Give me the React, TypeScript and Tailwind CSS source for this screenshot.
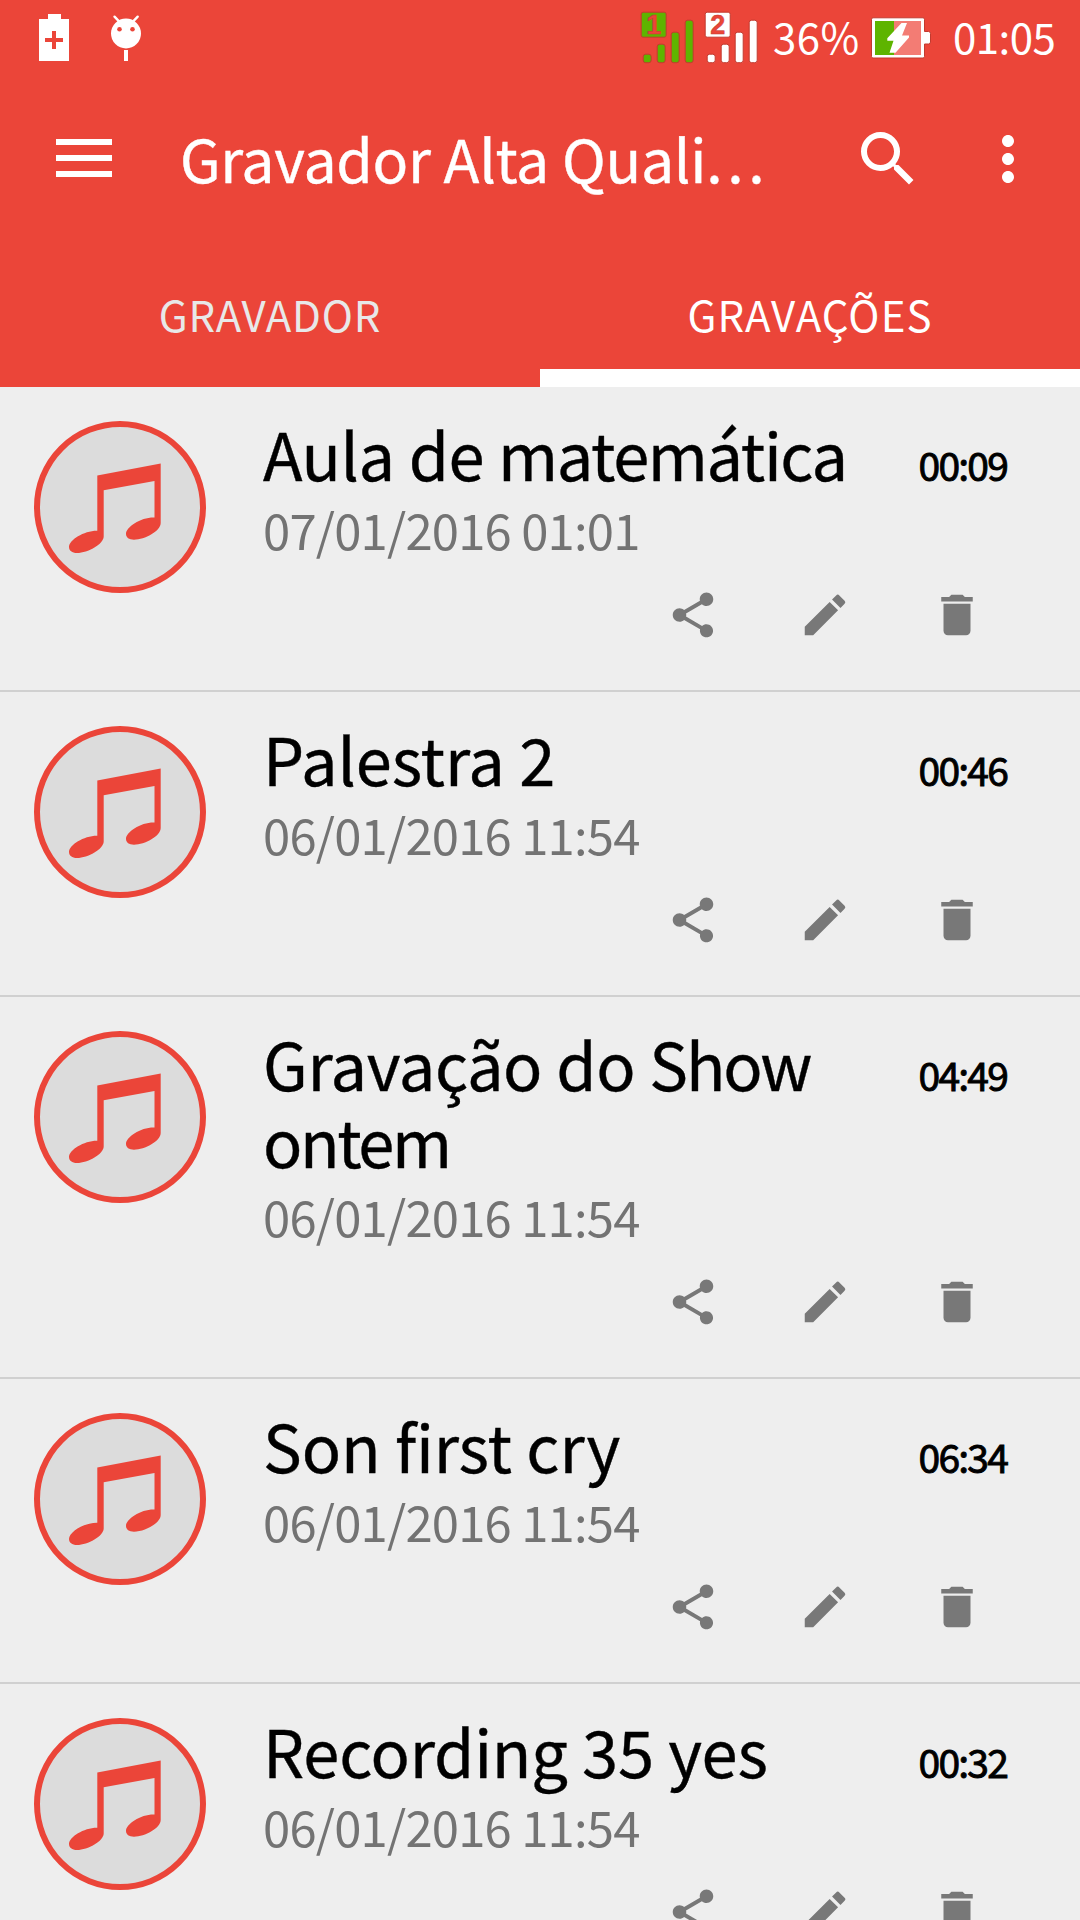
import { MdDelete, MdEdit, MdMoreVert, MdSearch, MdShare } from "react-icons/md";

type Recording = {
  title: { text: string; className: string }[];
  date: string;
  length: string;
};

const recordings: Recording[] = [
  {
    title: [
      { text: "Aula de ", className: "tracking-[-0.5px]" },
      { text: "matemática", className: "tracking-[-1.4px]" },
    ],
    date: "07/01/2016 01:01",
    length: "00:09",
  },
  {
    title: [{ text: "Palestra 2", className: "tracking-[-0.1px]" }],
    date: "06/01/2016 11:54",
    length: "00:46",
  },
  {
    title: [
      { text: "Gravação do ", className: "tracking-[-0.4px]" },
      { text: "Show ", className: "tracking-[-2.1px]" },
      { text: "ontem", className: "tracking-[-2.4px]" },
    ],
    date: "06/01/2016 11:54",
    length: "04:49",
  },
  {
    title: [{ text: "Son first cry", className: "tracking-[-0.1px]" }],
    date: "06/01/2016 11:54",
    length: "06:34",
  },
  {
    title: [{ text: "Recording 35 yes", className: "tracking-[-0.2px]" }],
    date: "06/01/2016 11:54",
    length: "00:32",
  },
];

function SignalIcon({ sim, color }: { sim: string; color: string }) {
  return (
    <svg width="56" height="56" viewBox="0 0 56 56" className="shrink-0">
      <g fill={color} stroke="#c23a2f" strokeWidth="1">
        <rect x="1.2" y="2.2" width="25" height="25" rx="2" />
        <rect x="3.2" y="44.2" width="8" height="8.5" rx="2.5" />
        <rect x="17.2" y="34.2" width="8" height="18.5" rx="2.5" />
        <rect x="31.2" y="22.2" width="8" height="30.5" rx="2.5" />
        <rect x="45.2" y="10.2" width="8" height="42.5" rx="2.5" />
      </g>
      <text
        x="13.7"
        y="24.3"
        textAnchor="middle"
        fill="#eb4539"
        stroke="#c23a2f"
        strokeWidth="0.5"
        className="font-['Liberation_Sans'] text-[27px] font-bold"
      >
        {sim}
      </text>
    </svg>
  );
}

function StatusBar() {
  return (
    <div className="flex h-[75px] items-start">
      <svg width="32" height="48" viewBox="0 0 32 48" className="mt-[14px] ml-[38px]">
        <path fill="#fff" d="M1 5h9V0h13v5h8v42H1z" />
        <path stroke="#eb4539" strokeWidth="4" d="M16 17v18M7 26h18" />
      </svg>
      <svg width="32" height="48" viewBox="0 0 32 48" className="mt-[14px] ml-10">
        <circle cx="16" cy="19.5" r="15" fill="#fff" />
        <path
          stroke="#fff"
          strokeWidth="2.4"
          strokeLinecap="round"
          d="M4.500 2.700l4.500 4.600M27.700 2.700l-4.500 4.600"
        />
        <circle cx="9.5" cy="15.3" r="2.3" fill="#eb4539" />
        <circle cx="22.5" cy="15.3" r="2.3" fill="#eb4539" />
        <path fill="#fff" d="M14 36h4v11h-4z" />
      </svg>
      <div className="mt-[10px] ml-[498px] flex gap-2">
        <SignalIcon sim="1" color="#5eb400" />
        <SignalIcon sim="2" color="#ffffff" />
      </div>
      <span className="ml-[13px] w-[98px] text-[42px] leading-[72px] tracking-[0.4px] whitespace-nowrap">
        36%
      </span>
      <svg width="60" height="42" viewBox="0 0 60 42" className="mt-[17px]">
        <path
          fill="#fff"
          stroke="#c23a2f"
          strokeWidth="1"
          d="M2 .8h50a1.500 1.500 0 011.500 1.500V14.500h4a2 2 0 012 2V25a2 2 0 01-2 2h-4V39.500a1.500 1.500 0 01-1.500 1.500H2A1.500 1.500 0 01.500 39.500V2.300A1.500 1.500 0 012 .8z"
        />
        <path fill="#f37c74" d="M4 4h46v34H4z" />
        <path fill="#5eb400" d="M4 4h19v34H4z" />
        <path
          fill="#fff"
          d="M30.500 6h5.500l-5 12.500h7v2L24.500 35.700h-6l4-12h-6.200v-2.500z"
        />
      </svg>
      <span className="ml-[22px] text-[42px] leading-[72px] tracking-[-0.5px] whitespace-nowrap">
        01:05
      </span>
    </div>
  );
}

function Toolbar() {
  return (
    <div className="flex h-[168px] items-center">
      <button className="-mt-[2px] ml-14 flex w-14 flex-col gap-[10px]">
        <span className="h-[6px] bg-white" />
        <span className="h-[6px] bg-white" />
        <span className="h-[6px] bg-white" />
      </button>
      <h1 className="-mt-[2px] ml-[68px] w-[600px] text-[59px] leading-[80px] tracking-[-0.3px] whitespace-nowrap [-webkit-text-stroke:0.4px_#fff]">
        Gravador Alta Quali<span className="tracking-[4.6px]">...</span>
      </h1>
      <MdSearch className="ml-[72px] size-[72px] shrink-0" />
      <MdMoreVert className="ml-12 size-[72px] shrink-0" />
    </div>
  );
}

function Tabs() {
  return (
    <div className="grid h-36 grid-cols-2 text-center text-[42px] leading-[141px]">
      <div className="tracking-[0.8px] text-[#e8e8e8]">GRAVADOR</div>
      <div className="tracking-[1.1px] shadow-[inset_0_-18px_0_#ffffff]">GRAVAÇÕES</div>
    </div>
  );
}

function NoteIcon() {
  return (
    <svg width="172" height="172" viewBox="0 0 172 172" className="shrink-0">
      <circle cx="86" cy="86" r="83" fill="#dcdcdc" stroke="#eb4539" strokeWidth="6" />
      <path
        fill="#eb4539"
        d="M63.300 54.500L126.700 42.500V102C126.700 110 111 118.700 100 118.700C95 118.700 92 116.500 92 113C92 106 107 96 120.500 96.500V60L69.700 69.300V115.500C69.700 123 54 132 43 132C38 132 35 129.500 35 126C35 119 50 109.500 63.300 109.700z"
      />
    </svg>
  );
}

function RecordingRow({ recording }: { recording: Recording }) {
  return (
    <li className="flex border-b-2 border-[#d0d0d0] pb-12 pl-[34px]">
      <div className="pt-[34px]">
        <NoteIcon />
      </div>
      <div className="ml-[57px] w-[817px] pt-7">
        <div className="flex items-baseline justify-between">
          <h2 className="w-[600px] text-[65px] leading-[77px] text-black [-webkit-text-stroke:0.4px_#000]">
            {recording.title.map((part) => (
              <span key={part.text} className={part.className}>
                {part.text}
              </span>
            ))}
          </h2>
          <span className="mr-[73px] text-[39px] leading-[50px] tracking-[-1.8px] whitespace-nowrap text-black [-webkit-text-stroke:0.9px_#000]">
            {recording.length}
          </span>
        </div>
        <p className="text-[49px] leading-[73px] tracking-[-0.8px] text-[#737373]">
          {recording.date}
        </p>
        <div className="mt-[23px] ml-[403px] flex gap-[78px] text-[#787878]">
          <MdShare className="size-[54px]" />
          <MdEdit className="size-[54px]" />
          <MdDelete className="size-[54px]" />
        </div>
      </div>
    </li>
  );
}

export default function App() {
  return (
    <div className="h-[1920px] w-[1080px] overflow-hidden bg-[#eeeeee] font-['Noto_Sans_CJK_SC',sans-serif]">
      <header className="bg-[#eb4539] text-white">
        <StatusBar />
        <Toolbar />
        <Tabs />
      </header>
      <ul>
        {recordings.map((recording) => (
          <RecordingRow key={recording.length} recording={recording} />
        ))}
      </ul>
    </div>
  );
}
